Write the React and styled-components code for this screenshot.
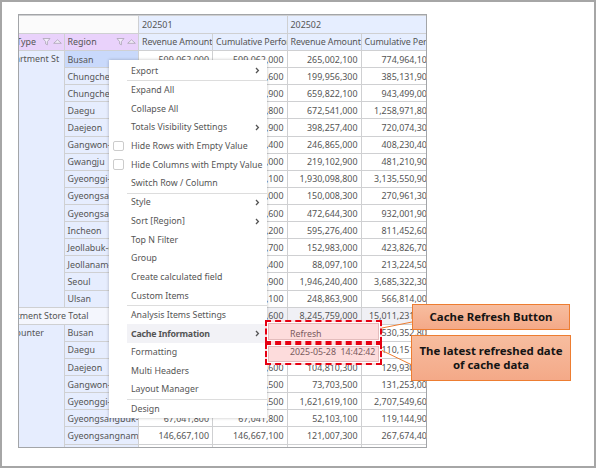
import React from "react";
import styled, { createGlobalStyle } from "styled-components";

const GlobalStyle = createGlobalStyle`
  html, body {
    margin: 0;
    padding: 0;
    background: #ffffff;
  }
  body {
    font-family: "Noto Sans", "Noto Sans CJK KR", "Liberation Sans", sans-serif;
  }
`;

const Frame = styled.div`
  position: relative;
  box-sizing: border-box;
  width: 596px;
  height: 468px;
  padding: 12px 0 0 16px;
  border: 2px solid #a6a6a6;
  background: #ffffff;
  overflow: hidden;
`;

const TableWrap = styled.div`
  box-sizing: border-box;
  width: 409px;
  height: 434px;
  border: 1.5px solid #a3a5a8;
  overflow: hidden;
`;

const Table = styled.table`
  margin-left: -29px;
  width: 445px;
  table-layout: fixed;
  border-collapse: collapse;
  font-size: 8.9px;
  color: #555555;
`;

const Col = styled.col`
  width: ${(p) => p.$w}px;
`;

const Row = styled.tr`
  height: ${(p) => (p.$head ? 17.5 : 17.12)}px;
`;

const Cell = styled.td`
  box-sizing: border-box;
  padding: 0 3px;
  border: 1px solid #cfd0d2;
  white-space: nowrap;
  overflow: hidden;
  line-height: 15px;
  text-align: left;
  background: #ffffff;
`;

const NumCell = styled(Cell)`
  text-align: right;
  background: ${(p) => (p.$total ? "#f0f0f5" : "#ffffff")};
`;

const Corner = styled(Cell)`
  background: #fbfbfb;
`;

const PeriodCell = styled(Cell)`
  background: #e6eeff;
`;

const FieldCell = styled(Cell)`
  padding-left: ${(p) => (p.$flush ? 1 : 3)}px;
  background: #e9d2fb;
`;

const FieldInner = styled.div`
  display: flex;
  align-items: center;
  justify-content: space-between;
`;

const FieldIcons = styled.span`
  display: flex;
  align-items: center;
  gap: 2px;
  margin-right: -1px;
`;

const MeasureCell = styled(Cell)`
  background: #e6eeff;
  letter-spacing: -0.1px;
`;

const TypeCell = styled(Cell)`
  padding-left: 7px;
  background: #e6edfe;
  vertical-align: top;
`;

const RegionCell = styled(Cell)`
  background: ${(p) => (p.$selected ? "#c9d9fb" : "#e6edfe")};
`;

const TotalLabel = styled(Cell)`
  padding-left: 0;
  background: #f4f6fd;
`;

const Menu = styled.div`
  position: absolute;
  left: 107px;
  top: 58px;
  box-sizing: border-box;
  width: 158px;
  height: 358px;
  padding-top: 1.5px;
  background: #ffffff;
  box-shadow: 0 0 3px rgba(0, 0, 0, 0.25);
  font-size: 8.8px;
  color: #555555;
`;

const MenuItem = styled.div`
  position: relative;
  display: flex;
  align-items: center;
  justify-content: space-between;
  box-sizing: border-box;
  height: 18.67px;
  margin-left: 18px;
  padding: 0 7px 0 4px;
  white-space: nowrap;
  font-weight: ${(p) => (p.$active ? 700 : 400)};
  letter-spacing: ${(p) => (p.$active ? "-0.2px" : "0")};
  background: ${(p) => (p.$active ? "#f2f2f6" : "transparent")};
`;

const Separator = styled.div`
  height: 0;
  margin: 0 0 -0.5px 18px;
  border-top: 1.6px solid #dddddd;
`;

const CheckBox = styled.span`
  position: absolute;
  left: -14px;
  top: 4px;
  box-sizing: border-box;
  width: 10.5px;
  height: 10.5px;
  border: 1px solid #cccccc;
  border-radius: 2px;
  background: #ffffff;
`;

const SubMenu = styled.div`
  position: absolute;
  left: 263px;
  top: 318px;
  display: flex;
  flex-direction: column;
  box-sizing: border-box;
  width: 117px;
`;

const SubItem = styled.div`
  box-sizing: border-box;
  height: ${(p) => p.$h}px;
  padding-left: 23px;
  padding-top: 1px;
  line-height: ${(p) => p.$line}px;
  white-space: nowrap;
  border: 2.5px dashed #e60012;
  background: #fddcdc;
  font-size: 8.8px;
  color: #7a5a5c;
  box-shadow: inset 0 0 0 1px #ffffff, inset 0 0 0 2px #e3bcbc;
`;

const Callouts = styled.div`
  position: absolute;
  left: 410px;
  top: 302px;
  display: flex;
  flex-direction: column;
  gap: 5px;
  width: 158px;
`;

const Callout = styled.div`
  display: flex;
  align-items: center;
  justify-content: center;
  box-sizing: border-box;
  height: ${(p) => p.$h}px;
  margin: 0 ${(p) => (p.$wide ? "-1px" : "0")};
  border: 1px solid #ed7d31;
  background: linear-gradient(#f7bd9f, #f4a988);
  font-size: 11.4px;
  font-weight: 700;
  line-height: 14px;
  text-align: center;
  color: #141414;
`;

const Connectors = styled.svg`
  position: absolute;
  left: 0;
  top: 0;
  pointer-events: none;
`;

const regions = [
  ["Busan", "509,062,000", "509,062,000", "265,002,100", "774,964,100"],
  ["Chungcheongbuk-do", "185,175,600", "185,175,600", "199,956,300", "385,131,900"],
  ["Chungcheongnam-do", "283,676,900", "283,676,900", "659,822,100", "943,499,000"],
  ["Daegu", "586,430,800", "586,430,800", "672,541,000", "1,258,971,800"],
  ["Daejeon", "321,816,900", "321,816,900", "398,257,400", "720,074,300"],
  ["Gangwon-do", "161,365,400", "161,365,400", "246,865,000", "408,230,400"],
  ["Gwangju", "262,108,000", "262,108,000", "219,102,900", "481,210,900"],
  ["Gyeonggi-do", "1,205,452,100", "1,205,452,100", "1,930,098,800", "3,135,550,900"],
  ["Gyeongsangbuk-do", "120,953,000", "120,953,000", "150,008,300", "270,961,300"],
  ["Gyeongsangnam-do", "459,357,600", "459,357,600", "472,644,300", "932,001,900"],
  ["Incheon", "216,176,200", "216,176,200", "595,276,400", "811,452,600"],
  ["Jeollabuk-do", "270,843,700", "270,843,700", "152,983,000", "423,826,700"],
  ["Jeollanam-do", "125,127,400", "125,127,400", "88,097,100", "213,224,500"],
  ["Seoul", "1,739,081,900", "1,739,081,900", "1,946,240,400", "3,685,322,300"],
  ["Ulsan", "317,950,100", "317,950,100", "248,863,900", "566,814,000"],
];

const counterRegions = [
  ["Busan", "297,612,800", "297,612,800", "232,740,000", "530,352,800"],
  ["Daegu", "62,480,100", "62,480,100", "47,670,900", "110,151,000"],
  ["Daejeon", "25,120,600", "25,120,600", "104,810,300", "129,930,900"],
  ["Gangwon-do", "57,549,500", "57,549,500", "73,703,500", "131,253,000"],
  ["Gyeonggi-do", "1,085,930,500", "1,085,930,500", "1,621,619,100", "2,707,549,600"],
  ["Gyeongsangbuk-do", "67,041,800", "67,041,800", "52,103,100", "119,144,900"],
  ["Gyeongsangnam", "146,667,100", "146,667,100", "121,007,300", "267,674,400"],
  ["Incheon", "93,210,400", "93,210,400", "88,410,200", "181,620,600"],
];

const menuItems = [
  { label: "Export", arrow: true },
  { sep: true },
  { label: "Expand All" },
  { label: "Collapse All" },
  { label: "Totals Visibility Settings", arrow: true },
  { label: "Hide Rows with Empty Value", check: true },
  { label: "Hide Columns with Empty Value", check: true },
  { label: "Switch Row / Column" },
  { sep: true },
  { label: "Style", arrow: true },
  { label: "Sort [Region]", arrow: true },
  { label: "Top N Filter" },
  { label: "Group" },
  { label: "Create calculated field" },
  { label: "Custom Items" },
  { sep: true },
  { label: "Analysis Items Settings" },
  { label: "Cache Information", arrow: true, active: true },
  { label: "Formatting" },
  { label: "Multi Headers" },
  { label: "Layout Manager" },
  { sep: true },
  { label: "Design" },
];

function SortIcons() {
  return (
    <FieldIcons>
      <svg width="9" height="9" viewBox="0 0 9 9">
        <path d="M1 1.5h7L5.4 4.6v3.2l-1.8-.9V4.6z" fill="#f3ecfb" stroke="#a9a3b2" strokeWidth="0.8" />
      </svg>
      <svg width="9" height="9" viewBox="0 0 9 9">
        <path d="M.7 6.3 4.5 2.8 8.3 6.3z" fill="#f3ecfb" stroke="#a9a3b2" strokeWidth="0.8" />
      </svg>
    </FieldIcons>
  );
}

function Chevron() {
  return (
    <svg width="5" height="7" viewBox="0 0 5 7">
      <path d="M1 1l2.4 2.5L1 6" fill="none" stroke="#555555" strokeWidth="1.3" />
    </svg>
  );
}

function DataRow({ row, first, type, rowSpan, selected }) {
  return (
    <Row>
      {first && <TypeCell rowSpan={rowSpan}>{type}</TypeCell>}
      <RegionCell $selected={first && selected}>{row[0]}</RegionCell>
      {row.slice(1).map((value, i) => (
        <NumCell key={i}>{value}</NumCell>
      ))}
    </Row>
  );
}

export default function App() {
  return (
    <>
      <GlobalStyle />
      <Frame>
        <TableWrap>
          <Table>
            <colgroup>
              <Col $w={73.5} />
              <Col $w={74.5} />
              <Col $w={74} />
              <Col $w={74.5} />
              <Col $w={74} />
              <Col $w={74.5} />
            </colgroup>
            <thead>
              <Row $head>
                <Corner colSpan={2} />
                <PeriodCell colSpan={2}>202501</PeriodCell>
                <PeriodCell colSpan={2}>202502</PeriodCell>
              </Row>
              <Row $head>
                <FieldCell $flush>
                  <FieldInner>
                    Store Type
                    <SortIcons />
                  </FieldInner>
                </FieldCell>
                <FieldCell>
                  <FieldInner>
                    Region
                    <SortIcons />
                  </FieldInner>
                </FieldCell>
                <MeasureCell>Revenue Amount</MeasureCell>
                <MeasureCell>Cumulative Performance</MeasureCell>
                <MeasureCell>Revenue Amount</MeasureCell>
                <MeasureCell>Cumulative Performance</MeasureCell>
              </Row>
            </thead>
            <tbody>
              {regions.map((row, i) => (
                <DataRow key={row[0]} row={row} first={i === 0} type="Department St" rowSpan={regions.length} selected />
              ))}
              <Row>
                <TotalLabel colSpan={2}>Department Store Total</TotalLabel>
                <NumCell $total>7,600,000,600</NumCell>
                <NumCell $total>7,600,000,600</NumCell>
                <NumCell $total>8,245,759,000</NumCell>
                <NumCell $total>15,011,231,000</NumCell>
              </Row>
              {counterRegions.map((row, i) => (
                <DataRow key={row[0]} row={row} first={i === 0} type="1F Counter" rowSpan={counterRegions.length} />
              ))}
            </tbody>
          </Table>
        </TableWrap>

        <Menu>
          {menuItems.map((item, i) =>
            item.sep ? (
              <Separator key={i} />
            ) : (
              <MenuItem key={i} $active={item.active}>
                {item.check && <CheckBox />}
                {item.label}
                {item.arrow && <Chevron />}
              </MenuItem>
            )
          )}
        </Menu>

        <SubMenu>
          <SubItem $h={23} $line={22}>Refresh</SubItem>
          <SubItem $h={22} $line={13}>2025-05-28&nbsp;&nbsp;14:42:42</SubItem>
        </SubMenu>

        <Connectors width="592" height="464">
          <path d="M380 326 410 320" stroke="#ed7d31" strokeWidth="1" />
          <path d="M380 348.5 410 363" stroke="#ed7d31" strokeWidth="1" />
        </Connectors>

        <Callouts>
          <Callout $h={26}>Cache Refresh Button</Callout>
          <Callout $h={46} $wide>
            The latest refreshed date
            <br />
            of cache data
          </Callout>
        </Callouts>
      </Frame>
    </>
  );
}
